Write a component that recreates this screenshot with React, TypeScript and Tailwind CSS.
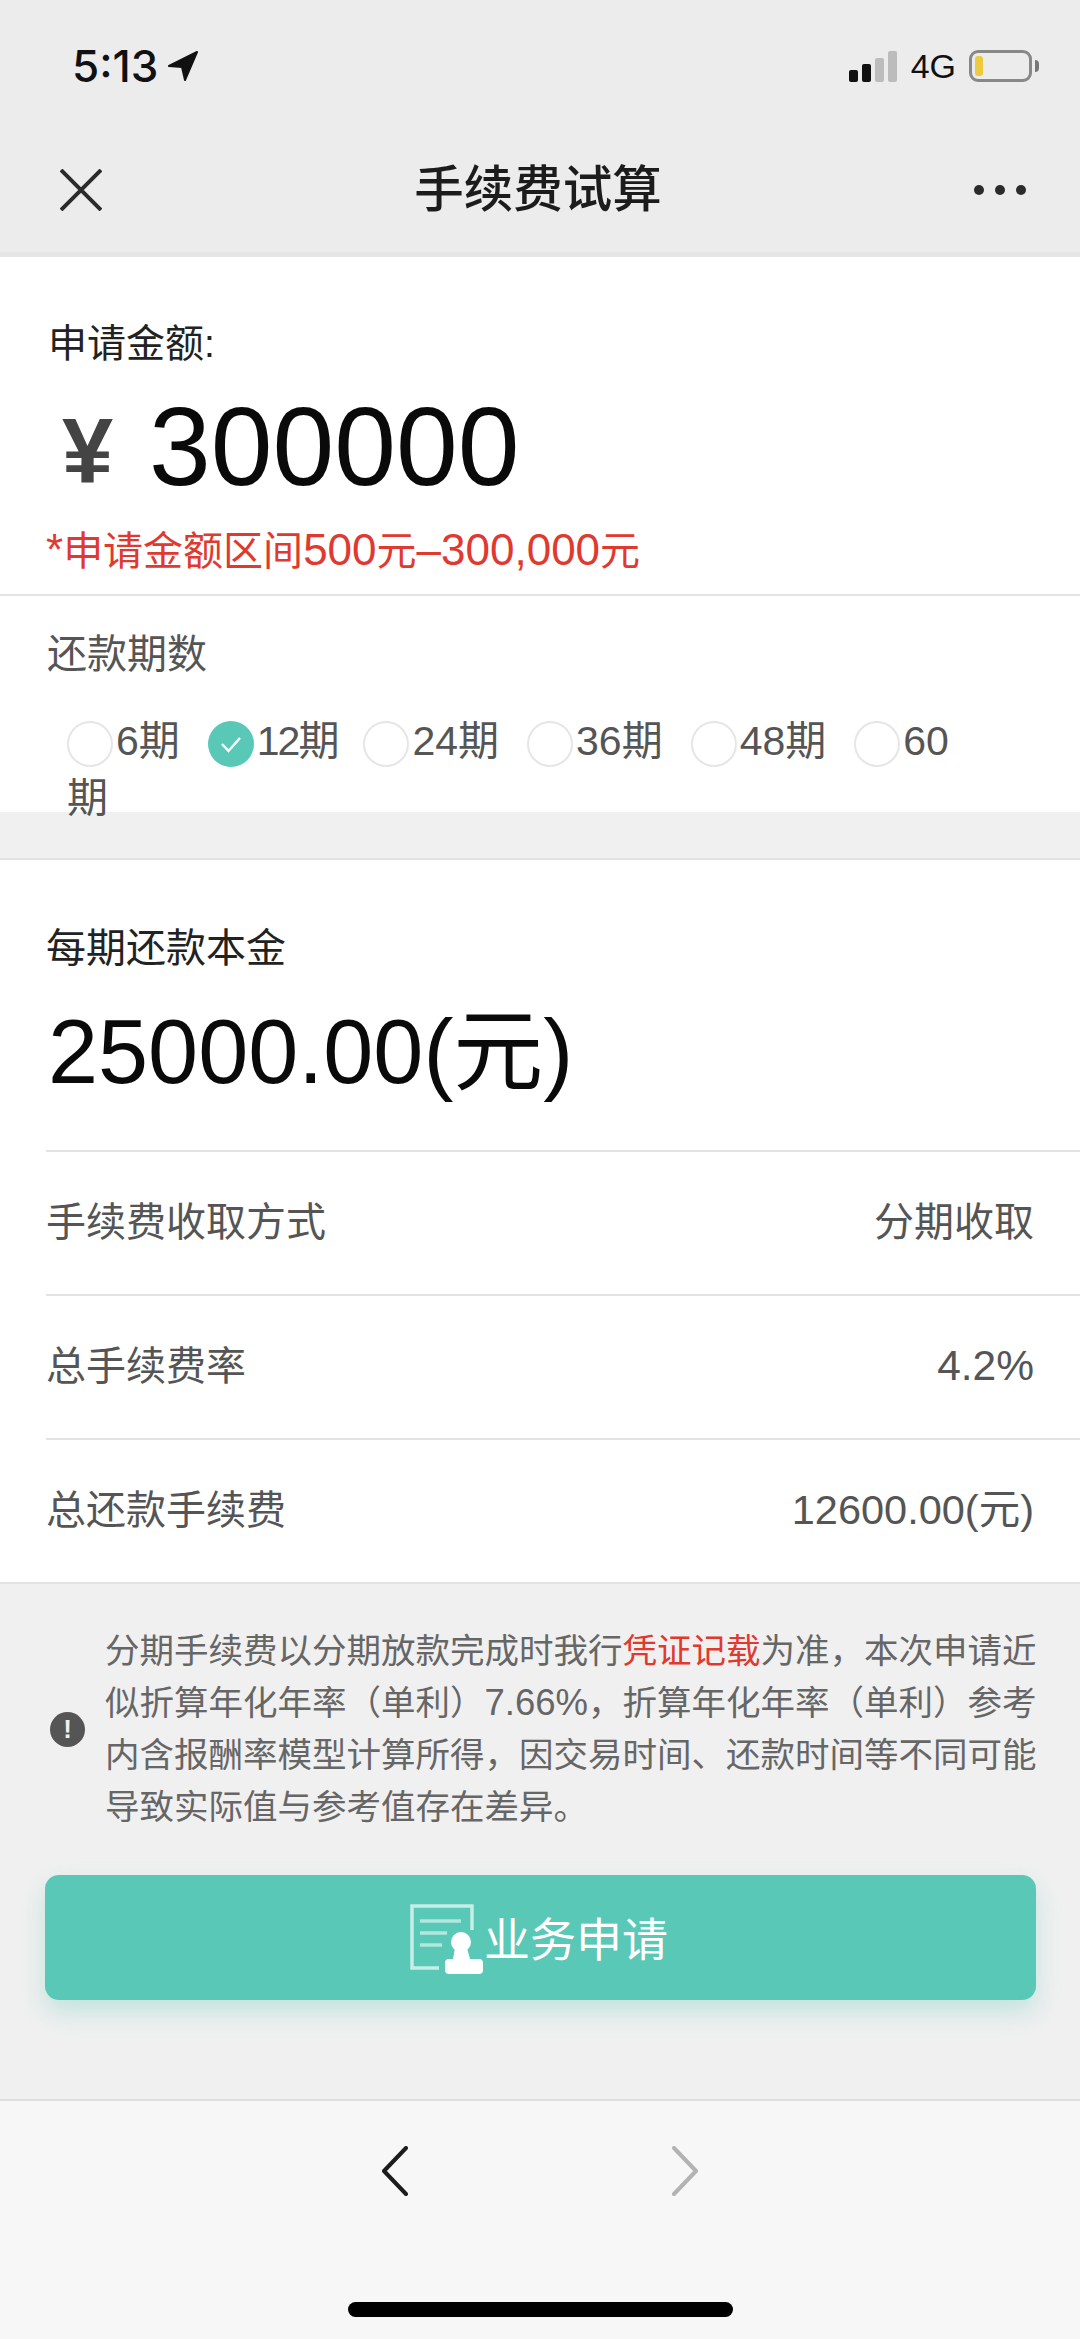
const periods = ["6期", "12期", "24期", "36期", "48期", "60期"];

function StatusBar() {
  return (
    <div className="flex h-[128px] items-center justify-between pl-[72px] pr-[41px] pt-1">
      <div className="flex items-center gap-[10px]">
        <span className="font-['Inter',sans-serif] text-[44px] leading-none font-medium text-[#111]">5:13</span>
        <svg width="30" height="30" viewBox="0 0 30 30">
          <path d="M29 1 L1 15 L14 16 L17 29 Z" fill="#111" stroke="#111" strokeWidth="2" strokeLinejoin="round" />
        </svg>
      </div>
      <div className="flex items-center">
        <div className="flex items-end gap-[4px]">
          <div className="h-[12px] w-[9px] rounded-[2px] bg-[#111]" />
          <div className="h-[18px] w-[9px] rounded-[2px] bg-[#111]" />
          <div className="h-[24px] w-[9px] rounded-[2px] bg-[#bcbcbc]" />
          <div className="h-[31px] w-[9px] rounded-[2px] bg-[#bcbcbc]" />
        </div>
        <span className="ml-[14px] text-[34px] leading-none text-[#111]">4G</span>
        <div className="ml-[13px] flex h-[32px] w-[63px] items-center rounded-[9px] border-[3px] border-[#888] pl-[3px]">
          <div className="h-[20px] w-[8px] rounded-[3px] bg-[#eeca3e]" />
        </div>
        <div className="ml-[3px] h-[12px] w-[4px] rounded-r-full bg-[#777]" />
      </div>
    </div>
  );
}

function NavBar() {
  return (
    <div className="flex h-[129px] items-center justify-between border-b-[5px] border-[#e6e6e6] pb-[5px] pl-[60px] pr-[54px] pt-1">
      <svg width="42" height="42" viewBox="0 0 42 42" fill="none" stroke="#2b2b2b" strokeWidth="4">
        <path d="M1 1 L41 41 M41 1 L1 41" />
      </svg>
      <h1 className="text-[49.5px] leading-none font-medium text-[#1c1c1c]">手续费试算</h1>
      <div className="flex gap-[11px]">
        <div className="size-[10px] rounded-full bg-[#2b2b2b]" />
        <div className="size-[10px] rounded-full bg-[#2b2b2b]" />
        <div className="size-[10px] rounded-full bg-[#2b2b2b]" />
      </div>
    </div>
  );
}

function AmountSection() {
  return (
    <section className="h-[339px] border-b-2 border-[#e3e3e3] bg-white pt-[57px]">
      <p className="pl-[48px] text-[39px] leading-[60px] text-[#222]">申请金额:</p>
      <div className="mt-[13px] flex h-[120px] items-center">
        <span className="ml-[62px] w-[87px] pt-[8px] text-[92px] leading-none font-bold text-[#444]">¥</span>
        <span className="text-[111px] leading-none text-[#0a0a0a]">300000</span>
      </div>
      <p className="mt-[13px] pl-[46px] text-[44px] leading-[60px] text-[#e0392f]">
        *<span className="text-[40px]">申请金额区间</span>500<span className="text-[40px]">元</span>–300,000<span className="text-[40px]">元</span>
      </p>
    </section>
  );
}

function PeriodSection() {
  return (
    <section className="h-[216px] bg-white pt-[28px]">
      <p className="pl-[47px] text-[40px] leading-[60px] text-[#555]">还款期数</p>
      <div className="mt-[29px] w-[980px] pl-[67px] text-[41px] leading-[57px] text-[#555]">
        {periods.map((p) =>
          p === "12期" ? (
            <span key={p}>
              <span className="mr-[3px] inline-flex size-[46px] items-center justify-center rounded-full bg-[#5ac8b6] align-middle">
                <svg width="26" height="26" viewBox="0 0 26 26" fill="none" stroke="#fff" strokeWidth="2.5">
                  <path d="M4 13 L10.5 20 L22 7" />
                </svg>
              </span>
              <span className="tracking-[-2px]">{p}</span>
              <span className="inline-block w-[26px]" />
            </span>
          ) : (
            <span key={p}>
              <span className="mr-[3px] inline-block size-[46px] rounded-full border-2 border-[#e6e6e6] align-middle" />
              {p}
              <span className="inline-block w-[28px]" />
            </span>
          ),
        )}
      </div>
    </section>
  );
}

function ResultRow({ label, value, size }: { label: string; value: string; size: string }) {
  return (
    <div className="flex h-[144px] items-center justify-between border-t-2 border-[#e2e2e2] pr-[46px] pb-[2px] text-[#555]">
      <span className="text-[40px]">{label}</span>
      <span className={size}>{value}</span>
    </div>
  );
}

function ResultSection() {
  return (
    <section className="mt-[46px] border-y-2 border-[#e2e2e2] bg-white pt-[58px]">
      <p className="pl-[46px] text-[40px] leading-[60px] text-[#222]">每期还款本金</p>
      <p className="mt-[14px] pl-[48px] text-[90px] leading-[120px] text-[#0a0a0a]">25000.00(元)</p>
      <div className="mt-[38px] ml-[46px]">
        <ResultRow label="手续费收取方式" value="分期收取" size="text-[40px]" />
        <ResultRow label="总手续费率" value="4.2%" size="text-[42.5px]" />
        <ResultRow label="总还款手续费" value="12600.00(元)" size="text-[41.5px]" />
      </div>
    </section>
  );
}

function Notice() {
  return (
    <div className="mt-[41px] flex items-center pl-[50px]">
      <div className="flex size-[35px] shrink-0 items-center justify-center rounded-full bg-[#555] text-[26px] leading-none font-bold text-[#f0f0f0]">
        !
      </div>
      <p className="ml-[20px] w-[935px] text-[34.5px] leading-[52px] text-[#666]">
        分期手续费以分期放款完成时我行<span className="text-[#e0392f]">凭证记载</span>为准，本次申请近似折算年化年率（单利）<span className="text-[36.5px]">7.66%</span>，折算年化年率（单利）参考内含报酬率模型计算所得，因交易时间、还款时间等不同可能导致实际值与参考值存在差异。
      </p>
    </div>
  );
}

function ApplyButton() {
  return (
    <button className="mt-[42px] ml-[45px] flex h-[125px] w-[991px] items-center justify-center rounded-[14px] bg-[#5ac8b6] pt-[4px] shadow-[0_12px_24px_rgba(90,200,182,0.3)]">
      <svg width="74" height="72" viewBox="0 0 74 72" fill="none">
        <path d="M62 26 V2 H2 V64 H29" stroke="#d9f5ef" strokeWidth="3.5" opacity="0.85" />
        <path d="M10 17 H51 M10 29 H37 M10 41 H32" stroke="#c8efe7" strokeWidth="3.5" opacity="0.8" />
        <circle cx="51" cy="38" r="10" fill="#fff" />
        <path d="M45 44 H57 L60 55 H69 Q73 55 73 59 V66 Q73 70 69 70 H39 Q35 70 35 66 V59 Q35 55 39 55 H43 Z" fill="#fff" />
      </svg>
      <span className="mr-[3px] text-[46px] leading-none text-white">业务申请</span>
    </button>
  );
}

function BottomBar() {
  return (
    <div className="relative flex h-[240px] justify-center border-t-2 border-[#dedede] bg-[#f7f7f7] pt-[45px]">
      <div className="flex w-[316px] justify-between">
        <svg width="26" height="50" viewBox="0 0 26 50" fill="none" stroke="#1c1c1c" strokeWidth="4" strokeLinecap="round" strokeLinejoin="round">
          <path d="M24 2 L2 25 L24 48" />
        </svg>
        <svg width="26" height="50" viewBox="0 0 26 50" fill="none" stroke="#b3b3b3" strokeWidth="4" strokeLinecap="round" strokeLinejoin="round">
          <path d="M2 2 L24 25 L2 48" />
        </svg>
      </div>
      <div className="absolute top-[201px] left-[348px] h-[15px] w-[385px] rounded-full bg-black" />
    </div>
  );
}

export default function App() {
  return (
    <div className="h-[2339px] w-[1080px] overflow-hidden bg-[#f0f0f0] font-['Liberation_Sans','Noto_Sans_CJK_SC',sans-serif]">
      <header className="bg-[#ececec]">
        <StatusBar />
        <NavBar />
      </header>
      <AmountSection />
      <PeriodSection />
      <ResultSection />
      <Notice />
      <ApplyButton />
      <div className="h-[99px]" />
      <BottomBar />
    </div>
  );
}
